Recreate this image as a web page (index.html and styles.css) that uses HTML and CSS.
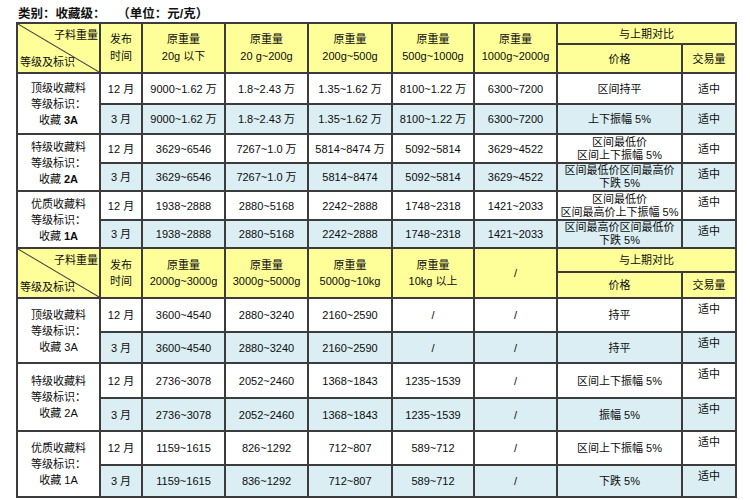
FILE: index.html
```html
<!DOCTYPE html>
<html lang="zh">
<head>
<meta charset="utf-8">
<link rel="stylesheet" href="styles.css">
</head>
<body>
<div class="title">类别：收藏级：<span class="unit">（单位：元/克）</span></div>
<table class="grid">
  <colgroup>
    <col class="c1"><col class="c2"><col class="c3"><col class="c4"><col class="c5"><col class="c6"><col class="c7"><col class="c8"><col class="c9">
  </colgroup>
  <tr class="h1a">
    <td rowspan="2" class="hd diag"><div class="diagbox"><span class="dr">子料重量</span><span class="dl">等级及标识</span></div></td>
    <td rowspan="2" class="hd two"><span class="ln">发布</span><span class="ln">时间</span></td>
    <td rowspan="2" class="hd two"><span class="ln">原重量</span><span class="ln">20g 以下</span></td>
    <td rowspan="2" class="hd two"><span class="ln">原重量</span><span class="ln">20 g~200g</span></td>
    <td rowspan="2" class="hd two"><span class="ln">原重量</span><span class="ln">200g~500g</span></td>
    <td rowspan="2" class="hd two"><span class="ln">原重量</span><span class="ln">500g~1000g</span></td>
    <td rowspan="2" class="hd two"><span class="ln">原重量</span><span class="ln">1000g~2000g</span></td>
    <td colspan="2" class="hd">与上期对比</td>
  </tr>
  <tr class="h1b">
    <td class="hd">价格</td>
    <td class="hd">交易量</td>
  </tr>

  <tr class="r31">
    <td rowspan="2" class="grp"><span class="ln">顶级收藏料</span><span class="ln">等级标识：</span><span class="ln">收藏 <b>3A</b></span></td>
    <td>12 月</td><td>9000~1.62 万</td><td>1.8~2.43 万</td><td>1.35~1.62 万</td><td>8100~1.22 万</td><td>6300~7200</td><td>区间持平</td><td>适中</td>
  </tr>
  <tr class="r30 blue">
    <td>3 月</td><td>9000~1.62 万</td><td>1.8~2.43 万</td><td>1.35~1.62 万</td><td>8100~1.22 万</td><td>6300~7200</td><td>上下振幅 5%</td><td>适中</td>
  </tr>
  <tr class="r29">
    <td rowspan="2" class="grp"><span class="ln">特级收藏料</span><span class="ln">等级标识：</span><span class="ln">收藏 <b>2A</b></span></td>
    <td>12 月</td><td>3629~6546</td><td>7267~1.0 万</td><td>5814~8474 万</td><td>5092~5814</td><td>3629~4522</td><td class="tl"><span class="ln">区间最低价</span><span class="ln">区间上下振幅 5%</span></td><td>适中</td>
  </tr>
  <tr class="r28 blue">
    <td>3 月</td><td>3629~6546</td><td>7267~1.0 万</td><td>5814~8474</td><td>5092~5814</td><td>3629~4522</td><td class="tl"><span class="ln">区间最低价区间最高价</span><span class="ln">下跌 5%</span></td><td class="top">适中</td>
  </tr>
  <tr class="r29">
    <td rowspan="2" class="grp"><span class="ln">优质收藏料</span><span class="ln">等级标识：</span><span class="ln">收藏 <b>1A</b></span></td>
    <td>12 月</td><td>1938~2888</td><td>2880~5168</td><td>2242~2888</td><td>1748~2318</td><td>1421~2033</td><td class="tl"><span class="ln">区间最低价</span><span class="ln">区间最高价上下振幅 5%</span></td><td class="top">适中</td>
  </tr>
  <tr class="r28 blue">
    <td>3 月</td><td>1938~2888</td><td>2880~5168</td><td>2242~2888</td><td>1748~2318</td><td>1421~2033</td><td class="tl"><span class="ln">区间最高价区间最低价</span><span class="ln">下跌 5%</span></td><td class="top">适中</td>
  </tr>

  <tr class="h2a">
    <td rowspan="2" class="hd diag"><div class="diagbox"><span class="dr">子料重量</span><span class="dl">等级及标识</span></div></td>
    <td rowspan="2" class="hd two"><span class="ln">发布</span><span class="ln">时间</span></td>
    <td rowspan="2" class="hd two"><span class="ln">原重量</span><span class="ln">2000g~3000g</span></td>
    <td rowspan="2" class="hd two"><span class="ln">原重量</span><span class="ln">3000g~5000g</span></td>
    <td rowspan="2" class="hd two"><span class="ln">原重量</span><span class="ln">5000g~10kg</span></td>
    <td rowspan="2" class="hd two"><span class="ln">原重量</span><span class="ln">10kg 以上</span></td>
    <td rowspan="2" class="hd">/</td>
    <td colspan="2" class="hd">与上期对比</td>
  </tr>
  <tr class="h2b">
    <td class="hd">价格</td>
    <td class="hd">交易量</td>
  </tr>

  <tr class="r34">
    <td rowspan="2" class="grp"><span class="ln">顶级收藏料</span><span class="ln">等级标识：</span><span class="ln">收藏 3A</span></td>
    <td>12 月</td><td>3600~4540</td><td>2880~3240</td><td>2160~2590</td><td>/</td><td>/</td><td>持平</td><td class="top">适中</td>
  </tr>
  <tr class="r31 blue">
    <td>3 月</td><td>3600~4540</td><td>2880~3240</td><td>2160~2590</td><td>/</td><td>/</td><td>持平</td><td class="top">适中</td>
  </tr>
  <tr class="r35">
    <td rowspan="2" class="grp"><span class="ln">特级收藏料</span><span class="ln">等级标识：</span><span class="ln">收藏 2A</span></td>
    <td>12 月</td><td>2736~3078</td><td>2052~2460</td><td>1368~1843</td><td>1235~1539</td><td>/</td><td>区间上下振幅 5%</td><td class="top">适中</td>
  </tr>
  <tr class="r33 blue">
    <td>3 月</td><td>2736~3078</td><td>2052~2460</td><td>1368~1843</td><td>1235~1539</td><td>/</td><td>振幅 5%</td><td class="top">适中</td>
  </tr>
  <tr class="r34">
    <td rowspan="2" class="grp"><span class="ln">优质收藏料</span><span class="ln">等级标识：</span><span class="ln">收藏 1A</span></td>
    <td>12 月</td><td>1159~1615</td><td>826~1292</td><td>712~807</td><td>589~712</td><td>/</td><td>区间上下振幅 5%</td><td class="top">适中</td>
  </tr>
  <tr class="r32 blue">
    <td>3 月</td><td>1159~1615</td><td>836~1292</td><td>712~807</td><td>589~712</td><td>/</td><td>下跌 5%</td><td class="top">适中</td>
  </tr>
</table>
</body>
</html>
```

FILE: styles.css
```css
html, body {
  margin: 0;
  padding: 0;
  background: #ffffff;
}

body {
  font-family: "Liberation Sans", "Noto Sans CJK SC", sans-serif;
  color: #0d0d0d;
  width: 750px;
  height: 500px;
  overflow: hidden;
}

.title {
  height: 22px;
  box-sizing: border-box;
  padding: 6px 0 0 18px;
  font-size: 12.5px;
  line-height: 16px;
  font-weight: bold;
  color: #111;
}

.unit {
  margin-left: 18px;
}

.grid {
  margin-left: 16px;
  width: 719px;
  table-layout: fixed;
  border-collapse: collapse;
  font-size: 11px;
}

.c1 { width: 83px; }
.c2 { width: 42px; }
.c3 { width: 83px; }
.c4 { width: 83px; }
.c5 { width: 84px; }
.c6 { width: 82px; }
.c7 { width: 83px; }
.c8 { width: 125px; }
.c9 { width: 54px; }

.grid td {
  border: 2px solid #3c3c3c;
  padding: 0;
  text-align: center;
  vertical-align: middle;
  line-height: 14px;
  white-space: nowrap;
  overflow: hidden;
}

.ln {
  display: block;
  height: 13px;
  line-height: 13px;
}

.hd {
  background: #ffff99;
}

.two .ln {
  height: 17px;
  line-height: 17px;
}

.h2a .two .ln {
  height: 16px;
  line-height: 16px;
}

.blue td {
  background: #daeef3;
}

.grp {
  background: #ffffff;
}

.grp .ln {
  height: 16px;
  line-height: 16px;
}

.grp b {
  font-weight: bold;
}

.grid td.top {
  vertical-align: top;
  padding-top: 3px;
}

.diag {
  background: linear-gradient(to top right, #ffff99 calc(50% - 1px), #3c3c3c 50%, #ffff99 calc(50% + 1px));
}

.diagbox {
  display: flex;
  flex-direction: column;
  justify-content: space-between;
  height: 44px;
  padding: 0 1px 0 2px;
}

.dr {
  align-self: flex-end;
  height: 18px;
  line-height: 18px;
}

.dl {
  align-self: flex-start;
  height: 16px;
  line-height: 16px;
}

.h1a { height: 21px; }
.h1b { height: 29px; }
.h2a { height: 24px; }
.h2b { height: 26px; }
.r28 { height: 28px; }
.r29 { height: 29px; }
.r30 { height: 30px; }
.r31 { height: 31px; }
.r32 { height: 32px; }
.r33 { height: 33px; }
.r34 { height: 34px; }
.r35 { height: 35px; }
```
